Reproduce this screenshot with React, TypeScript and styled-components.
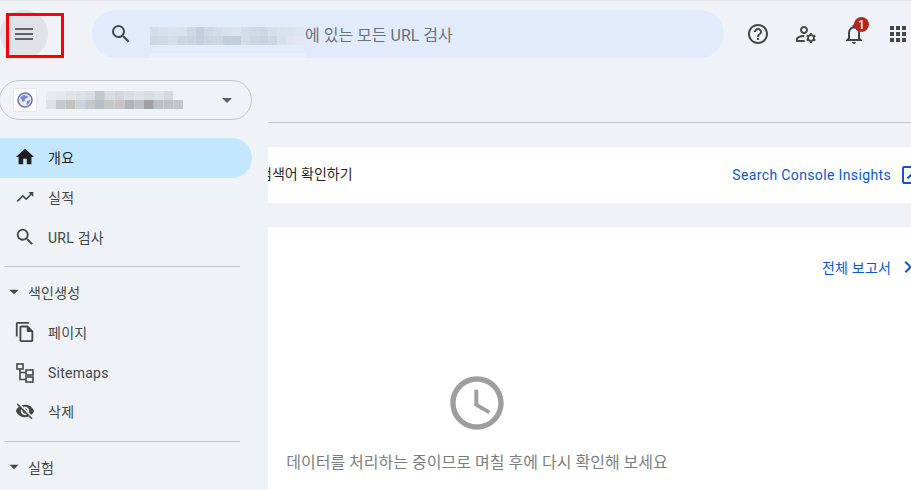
import React from "react";
import styled, { createGlobalStyle } from "styled-components";
import {
  MdMenu, MdSearch, MdHelpOutline, MdOutlineNotifications, MdApps, MdArrowDropDown, MdHome,
  MdTrendingUp, MdOutlineFileCopy, MdVisibilityOff, MdOpenInNew, MdChevronRight, MdAccessTime, MdOutlineManageAccounts,
} from "react-icons/md";

const Global = createGlobalStyle`
  html, body { margin: 0; padding: 0; width: 911px; height: 490px; overflow: hidden; background: #eff3f8; }
  body { font-family: Roboto, "Noto Sans CJK KR", sans-serif; }
  * { box-sizing: border-box; }
`;

const Page = styled.div`
  width: 911px; height: 490px; overflow: hidden; position: relative;
  display: flex; flex-direction: column; background: #eff3f8; border-top: 1px solid #e2e3e5;
`;
const Header = styled.header`
  height: 66px; flex: none; display: flex; align-items: center;
`;
const MenuButton = styled.div`
  width: 48px; height: 48px; border-radius: 50%; background: #dfe2e6;
  display: flex; align-items: center; justify-content: center; color: #5f6368; flex: none;
`;
const Annotation = styled.div`
  position: absolute; left: 6px; top: 12px; width: 58px; height: 45px; border: 3px solid #ff0000;
`;
const SearchPill = styled.div`
  margin-left: 44px; width: 632px; height: 48px; border-radius: 24px; background: #e1ebfb;
  display: flex; align-items: center; padding-left: 17px; color: #444746; flex: none;
`;
const SearchGlyph = styled(MdSearch)`flex: none;`;
const SearchMask = styled.span`
  margin-left: 17px; width: 155px; height: 48px; flex: none; display: block;
  line-height: 0; padding-top: 17px;
  background: linear-gradient(#e1ebfb 0 43px, #e9f0fb 43px 48px);
`;
const SearchText = styled.span`
  font-size: 16px; color: #6d7175; white-space: nowrap;
`;
const Actions = styled.div`
  display: flex; align-items: center; color: #444746; margin-left: 10px;
`;
const ActionSlot = styled.div`
  width: 48px; height: 48px; display: flex; align-items: center; justify-content: center; position: relative; flex: none;
  &:last-child { margin-left: -4px; }
`;
const Badge = styled.span`
  position: absolute; left: 24px; top: 7px; width: 15px; height: 15px; border-radius: 50%; background: #b3261e;
  color: #fff; font-size: 12px; font-weight: 500; display: flex; align-items: center; justify-content: center;
`;
const Body = styled.div`
  flex: 1; min-height: 0; display: flex;
`;
const Sidebar = styled.nav`
  width: 268px; flex: none; display: flex; flex-direction: column; padding-top: 13px;
`;
const PropertyPill = styled.div`
  width: 253px; height: 40px; margin-left: -1px; border: 1px solid #c4c7c9; border-radius: 20px;
  display: flex; align-items: center; padding-left: 13px; color: #5f6368; flex: none;
`;
const PropertyIcon = styled.div`
  width: 24px; height: 24px; background: #fff; border: 1px solid #e3e5e8; border-radius: 2px;
  display: flex; align-items: center; justify-content: center; flex: none;
`;
const PropertyMask = styled.div`
  margin-left: 9px; line-height: 0; flex: none;
`;
const PropertyArrow = styled(MdArrowDropDown)`
  margin-left: 32px; flex: none;
`;
const NavList = styled.div`
  display: flex; flex-direction: column; padding-top: 18px;
`;
const NavItem = styled.div<{ $active?: boolean; $down?: number }>`
  width: 252px; height: 40px; display: flex; align-items: center; gap: 11px;
  padding: ${(p) => Math.max(0, ((p.$down ?? 0) - 1) * 2)}px 0 ${(p) => Math.max(0, (1 - (p.$down ?? 0)) * 2)}px 13px;
  font-size: 14px; letter-spacing: 0.25px; flex: none;
  color: ${(p) => (p.$active ? "#1f1f1f" : "#444746")};
  background: ${(p) => (p.$active ? "#c2e7ff" : "transparent")};
  border-radius: ${(p) => (p.$active ? "0 20px 20px 0" : "0")};
`;
const NavIconBox = styled.span`
  width: 24px; height: 24px; display: flex; align-items: center; justify-content: center; flex: none;
`;
const Divider = styled.div<{ $top: number; $bottom: number }>`
  width: 236px; height: 1px; background: #c4c7c9; margin: ${(p) => p.$top}px 0 ${(p) => p.$bottom}px 4px; flex: none;
`;
const SectionHead = styled.div`
  height: 24px; display: flex; align-items: center; padding-left: 5px; gap: 5px; color: #444746;
  font-size: 14px; letter-spacing: 0.2px; flex: none; margin-bottom: 8px;
`;
const Main = styled.main`
  flex: 1; min-width: 0; display: flex; flex-direction: column; overflow: hidden;
`;
const TabRule = styled.div`
  height: 1px; margin-top: 55px; background: #c4c7c9; flex: none;
`;
const InsightCard = styled.section`
  margin-top: 24px; height: 56px; background: #fff; display: flex; align-items: center; flex: none; width: 660px;
`;
const InsightText = styled.span`
  margin-left: -9px; font-size: 14px; color: #1f1f1f; white-space: nowrap; margin-top: -4px; flex: none;
`;
const InsightLink = styled.a`
  margin-left: auto; margin-right: 5px; display: flex; align-items: center; gap: 8px; color: #0b57d0;
  font-size: 14px; letter-spacing: 0.36px; white-space: nowrap; flex: none;
`;
const ReportCard = styled.section`
  margin-top: 24px; flex: 1; background: #fff; width: 660px; display: flex; flex-direction: column;
`;
const ReportLink = styled.a`
  align-self: flex-end; margin: 28px 0 0; display: flex; align-items: center; color: #0b57d0; font-size: 14px; letter-spacing: 0.2px; height: 24px; width: 106px;
`;
const ReportChevron = styled(MdChevronRight)`
  margin-left: 5px; flex: none;
`;
const EmptyState = styled.div`
  width: 418px; display: flex; flex-direction: column; align-items: center; padding-top: 92px;
  color: #9e9e9e;
`;
const EmptyText = styled.p`
  margin: 14px 0 0; font-size: 16px; color: #7b7e82; white-space: nowrap; letter-spacing: 0.02px;
`;

const searchCells = [
  "#d4dcea","#d8dfec","#dbe2ee","#d9e1ed","#cfd7e5","#c5cedd","#d0d8e6","#d4dcea","#d8e0ec","#dce3ee","#d3dbe8","#d0d9e6","#cdd6e4","#d6dee9","#d9e1ed","#d9e1ed","#dce4f0",
  "#cfd7e6","#d1d9e7","#d5dde9","#ccd5e3","#cbd3e2","#c4cddc","#cbd3e1","#cdd5e2","#c3ccda","#c2cbd9","#d4dce8","#cbd4e2","#c8d1df","#cdd6e4","#d7dfeb","#dde4f0","#e1e8f4",
];
const propCells = [
  "#e8ebf0","#e4e7ec","#dfe2e7","#dde0e5","#d8dce2","#c3c7cc","#d8dbe0","#d2d6da","#d9dde1","#dfe2e7","#d9dce1","#dfe2e6","#d6d9dc","#eff3f8",
  "#dee1e6","#c5c8cd","#c0c0bd","#cdd2da","#c4c6ca","#b9bec6","#c5c8c5","#c7c4c8","#b1b3b6","#b9c1c8","#a09fa1","#bcc0c6","#bdc1c6","#c3c7ca",
];

const Mosaic = ({ cells, cols, w, h }: { cells: string[]; cols: number; w: number; h: number }) => (
  <svg width={w * cols} height={h * Math.ceil(cells.length / cols)} aria-hidden="true">
    {cells.map((c, i) => (
      <rect key={i} x={(i % cols) * w} y={Math.floor(i / cols) * h} width={w} height={h} fill={c} />
    ))}
  </svg>
);

const Globe = () => (
  <svg width="16" height="16" viewBox="0 0 16 16" aria-hidden="true">
    <circle cx="8" cy="8" r="7" fill="#e8eaf6" stroke="#6a72b8" strokeWidth="1.6" />
    <path d="M3 6c1-2 3-3 5-3 1 1 2 1 3 1 0 2-2 2-3 3 0 2-1 3-2 3-1-1-1-2-3-4z" fill="#7c8ad0" />
    <path d="M10 9l3-1c0 2-1 4-3 5-1-1 0-3 0-4z" fill="#7c8ad0" />
  </svg>
);

const SitemapIcon = () => (
  <svg width="18" height="20" viewBox="0 0 18 20" fill="none" stroke="#444746" strokeWidth="1.6" aria-hidden="true">
    <rect x="1" y="1" width="6" height="5" />
    <rect x="10" y="7" width="7" height="5" />
    <rect x="10" y="14" width="7" height="5" />
    <path d="M4 6v10.500h6M4 9.500h6" />
  </svg>
);

const CaretIcon = () => (
  <svg width="18" height="18" viewBox="0 0 24 24" aria-hidden="true"><path d="M6 9l6 6 6-6z" fill="#444746" /></svg>
);

export default function App() {
  return (
    <Page>
      <Global />
      <Header>
        <MenuButton><MdMenu size={24} /></MenuButton>
        <SearchPill>
          <SearchGlyph size={24} />
          <SearchMask><Mosaic cells={searchCells} cols={17} w={9.1} h={9} /></SearchMask>
          <SearchText>에 있는 모든 URL 검사</SearchText>
        </SearchPill>
        <Actions>
          <ActionSlot><MdHelpOutline size={24} /></ActionSlot>
          <ActionSlot><MdOutlineManageAccounts size={24} /></ActionSlot>
          <ActionSlot><MdOutlineNotifications size={24} /><Badge>1</Badge></ActionSlot>
          <ActionSlot><MdApps size={24} /></ActionSlot>
        </Actions>
      </Header>
      <Annotation />
      <Body>
        <Sidebar>
          <PropertyPill>
            <PropertyIcon><Globe /></PropertyIcon>
            <PropertyMask><Mosaic cells={propCells} cols={14} w={9.8} h={9} /></PropertyMask>
            <PropertyArrow size={24} />
          </PropertyPill>
          <NavList>
            <NavItem $active><NavIconBox><MdHome size={22} /></NavIconBox>개요</NavItem>
            <NavItem><NavIconBox><MdTrendingUp size={20} /></NavIconBox>실적</NavItem>
            <NavItem><NavIconBox><MdSearch size={22} /></NavIconBox>URL 검사</NavItem>
            <Divider $top={8} $bottom={13} />
            <SectionHead><CaretIcon />색인생성</SectionHead>
            <NavItem $down={1}><NavIconBox><MdOutlineFileCopy size={22} /></NavIconBox>페이지</NavItem>
            <NavItem $down={2}><NavIconBox><SitemapIcon /></NavIconBox>Sitemaps</NavItem>
            <NavItem><NavIconBox><MdVisibilityOff size={20} /></NavIconBox>삭제</NavItem>
            <Divider $top={9} $bottom={13} />
            <SectionHead><CaretIcon />실험</SectionHead>
          </NavList>
        </Sidebar>
        <Main>
          <TabRule />
          <InsightCard>
            <InsightText>검색어 확인하기</InsightText>
            <InsightLink>Search Console Insights<MdOpenInNew size={24} /></InsightLink>
          </InsightCard>
          <ReportCard>
            <ReportLink>전체 보고서<ReportChevron size={24} /></ReportLink>
            <EmptyState>
              <MdAccessTime size={64} />
              <EmptyText>데이터를 처리하는 중이므로 며칠 후에 다시 확인해 보세요</EmptyText>
            </EmptyState>
          </ReportCard>
        </Main>
      </Body>
    </Page>
  );
}
